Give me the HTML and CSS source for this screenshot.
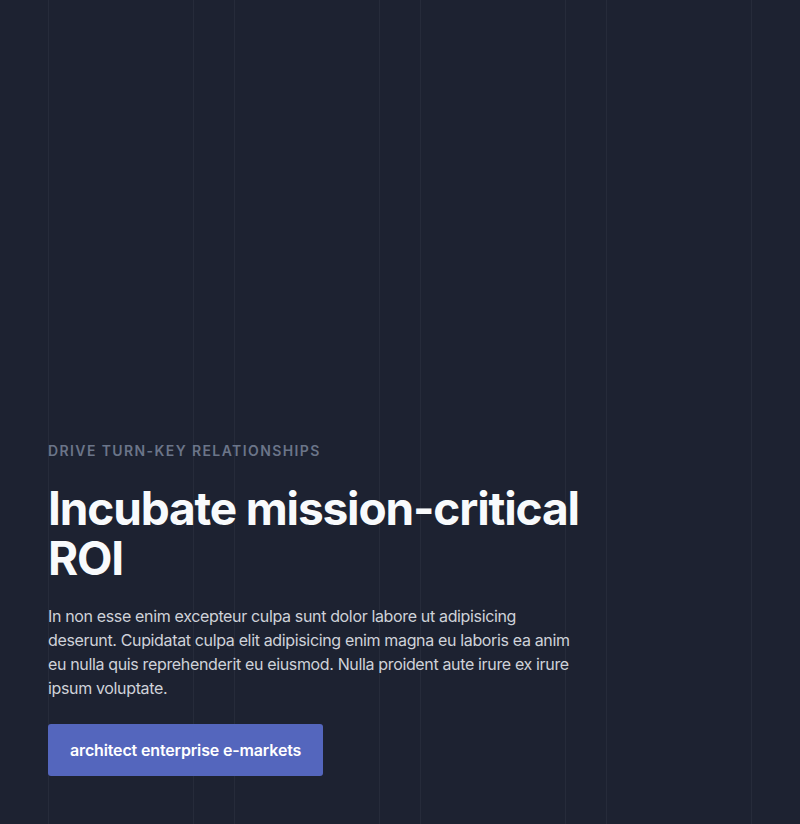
FILE: index.html
```html
<!DOCTYPE html>
<html lang="en">
<head>
<meta charset="utf-8">
<title>Incubate mission-critical ROI</title>
<link rel="stylesheet" href="styles.css">
</head>
<body>
<main class="hero">
  <div class="grid-lines" aria-hidden="true">
    <div class="col"></div>
    <div class="col"></div>
    <div class="col"></div>
    <div class="col"></div>
  </div>
  <div class="content">
    <p class="eyebrow">Drive turn-key relationships</p>
    <h1 class="title">Incubate mission-critical ROI</h1>
    <p class="lead">In non esse enim excepteur culpa sunt dolor labore ut adipisicing deserunt. Cupidatat culpa elit adipisicing enim magna eu laboris ea anim eu nulla quis reprehenderit eu eiusmod. Nulla proident aute irure ex irure ipsum voluptate.</p>
    <a class="cta" href="#">architect enterprise e-markets</a>
  </div>
</main>
</body>
</html>
```
FILE: styles.css
```css
* { box-sizing: border-box; }
html, body { margin: 0; padding: 0; }
body {
  background: #1d2231;
  font-family: Inter, "Noto Sans", sans-serif;
  color: #d1d5db;
}
.hero {
  position: relative;
  min-height: 824px;
  padding: 0 48px 48px;
  display: flex;
  flex-direction: column;
  justify-content: flex-end;
}
.grid-lines {
  position: absolute;
  inset: 0 48px;
  display: grid;
  grid-template-columns: repeat(4, 1fr);
  gap: 40px;
  pointer-events: none;
}
.col {
  border-left: 1px solid #262b3a;
  border-right: 1px solid #262b3a;
}
.content {
  position: relative;
  max-width: 576px;
}
.eyebrow {
  margin: 0;
  font-size: 14px;
  line-height: 20px;
  font-weight: 600;
  letter-spacing: 0.1em;
  text-transform: uppercase;
  color: #6b7589;
}
.title {
  margin: 22px 0 0;
  font-size: 46px;
  line-height: 50px;
  font-weight: 700;
  letter-spacing: -0.025em;
  color: #f8fafc;
}
.lead {
  margin: 21px 0 0;
  max-width: 530px;
  font-size: 16px;
  line-height: 24px;
  letter-spacing: -0.35px;
  color: #cfd2d9;
}
.cta {
  display: inline-block;
  margin-top: 24px;
  padding: 14px 22px;
  font-size: 16px;
  line-height: 24px;
  font-weight: 600;
  letter-spacing: -0.15px;
  color: #ffffff;
  background: #5466bd;
  border-radius: 3px;
  text-decoration: none;
}
```
